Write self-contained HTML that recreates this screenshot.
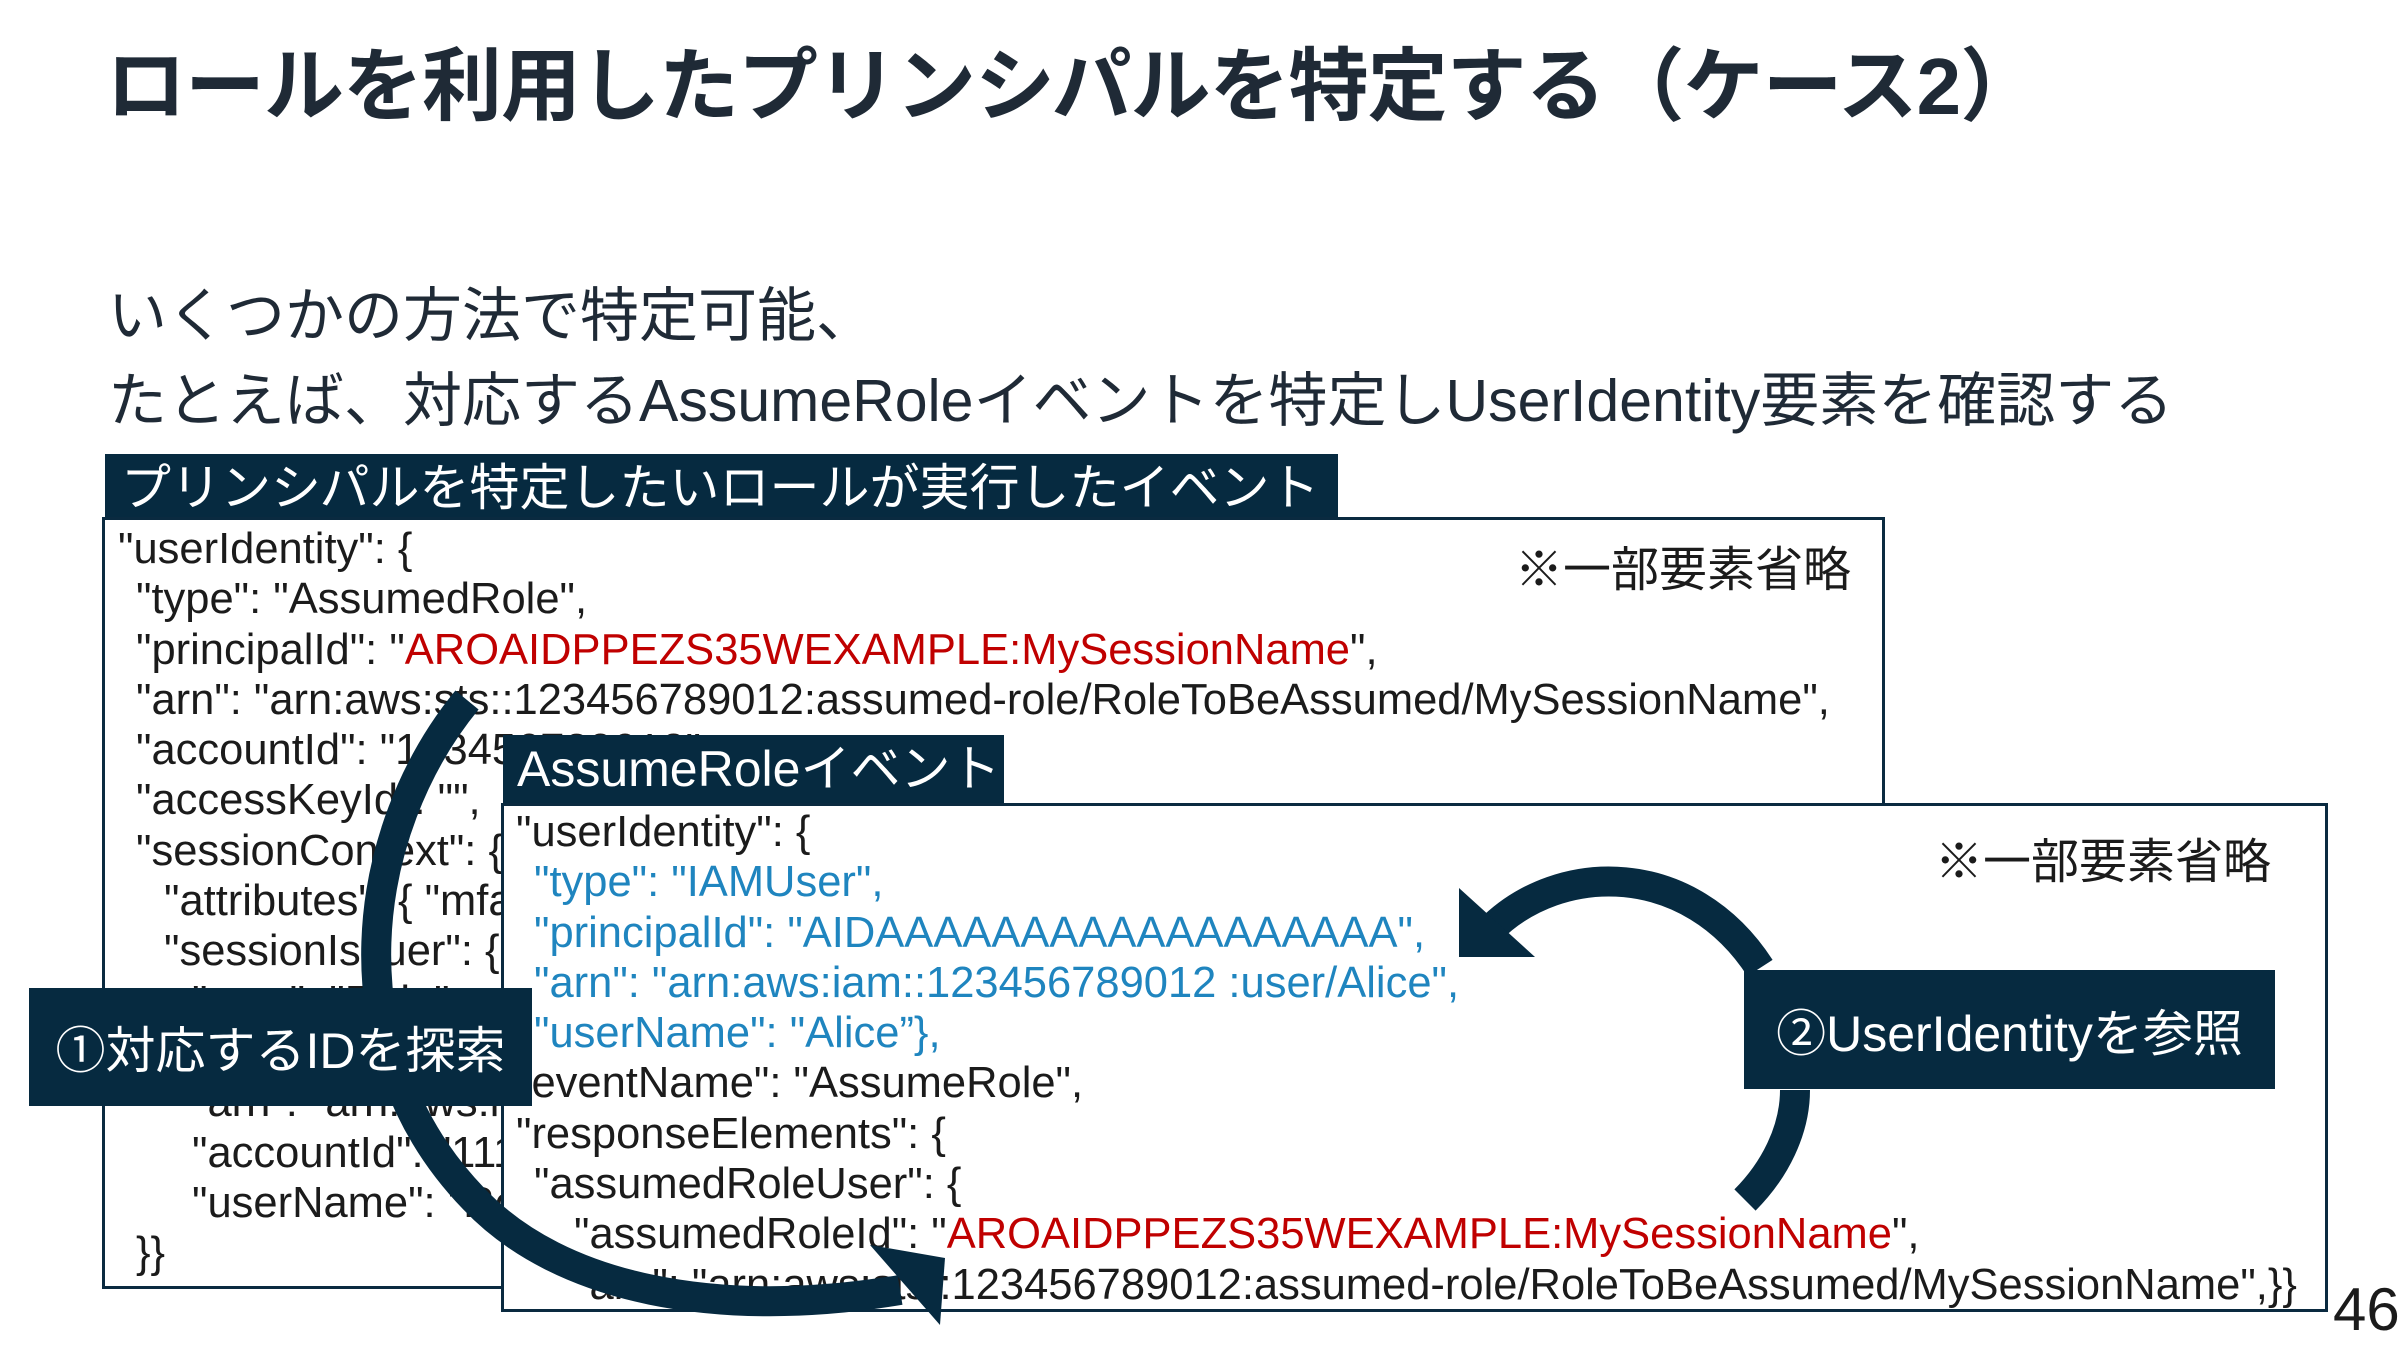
<!DOCTYPE html>
<html><head><meta charset="utf-8"><style>
*{margin:0;padding:0;box-sizing:border-box}
body{width:2400px;height:1350px;background:#fff;position:relative;overflow:hidden;font-family:"Liberation Sans","Noto Sans CJK JP",sans-serif;color:#1f2a36}
.a{position:absolute;white-space:nowrap}
.title{left:106px;top:22px;font-size:80px;font-weight:bold;color:#1f2a36;letter-spacing:-1px}
.sub{left:108px;font-size:59px;color:#1f2a36}
.box{position:absolute;background:#fff;border:3px solid #0a2a40}
.lab{position:absolute;background:#062a40;color:#fff;font-size:50px;line-height:69px;padding-left:16px;white-space:nowrap}
.code{position:absolute;font-size:43.5px;line-height:50.3px;color:#1b1b1b;white-space:nowrap}
.code div{height:50.3px}
.i1{padding-left:18px}.i2{padding-left:46px}.i3{padding-left:74px}.i4{padding-left:58px}
.r{color:#c00000}.b{color:#1f85bf}
.note{font-size:48px;color:#1b1b1b}
.call{position:absolute;background:#062a40;color:#fff;font-size:50px;display:flex;align-items:center;justify-content:center;white-space:nowrap}
</style></head><body>
<div class="a title">ロールを利用したプリンシパルを特定する（ケース2）</div>
<div class="a sub" style="top:268px">いくつかの方法で特定可能、</div>
<div class="a sub" style="top:353px">たとえば、対応するAssumeRoleイベントを特定しUserIdentity要素を確認する</div>

<div class="lab" style="left:105px;top:454px;width:1233px;height:69px">プリンシパルを特定したいロールが実行したイベント</div>
<div class="box" style="left:102px;top:517px;width:1783px;height:772px"></div>
<div class="a note" style="left:1515px;top:530px">※一部要素省略</div>
<div class="code" style="left:118px;top:524px">
<div>"userIdentity": {</div>
<div class="i1">"type": "AssumedRole",</div>
<div class="i1">"principalId": "<span class="r">AROAIDPPEZS35WEXAMPLE:MySessionName</span>",</div>
<div class="i1">"arn": "arn:aws:sts::123456789012:assumed-role/RoleToBeAssumed/MySessionName",</div>
<div class="i1">"accountId": "123456789012",</div>
<div class="i1">"accessKeyId": "",</div>
<div class="i1">"sessionContext": {</div>
<div class="i2">"attributes": { "mfaAuthenticated": "false" },</div>
<div class="i2">"sessionIssuer": {</div>
<div class="i3">"type": "Role",</div>
<div class="i3">"principalId": "AROAIDPPEZS35WEXAMPLE",</div>
<div class="i3">"arn": "arn:aws:iam::111122223333:role/RoleToBeAssumed",</div>
<div class="i3">"accountId": "111122223333",</div>
<div class="i3">"userName": "RoleToBeAssumed"</div>
<div class="i1">}}</div>
</div>

<div class="lab" style="left:503px;top:735px;width:501px;height:69px;padding-left:14px">AssumeRoleイベント</div>
<div class="box" style="left:501px;top:803px;width:1827px;height:509px"></div>
<div class="a note" style="left:1935px;top:822px">※一部要素省略</div>
<div class="code" style="left:516px;top:807px">
<div>"userIdentity": {</div>
<div class="i1 b">"type": "IAMUser",</div>
<div class="i1 b">"principalId": "AIDAAAAAAAAAAAAAAAAAA",</div>
<div class="i1 b">"arn": "arn:aws:iam::123456789012 :user/Alice",</div>
<div class="i1 b">"userName": "Alice”},</div>
<div>"eventName": "AssumeRole",</div>
<div>"responseElements": {</div>
<div class="i1">"assumedRoleUser": {</div>
<div class="i4">"assumedRoleId": "<span class="r">AROAIDPPEZS35WEXAMPLE:MySessionName</span>",</div>
<div class="i4">"arn": "arn:aws:sts::123456789012:assumed-role/RoleToBeAssumed/MySessionName",}}</div>
</div>

<svg class="a" style="left:0;top:0" width="2400" height="1350">
 <g fill="none" stroke="#062a40" stroke-width="30" stroke-linecap="butt">
  <path d="M467,700 C360,830 330,1050 474,1199 C560,1290 720,1320 900,1290"/>
  <path d="M1490,930 C1560,860 1690,860 1760,968"/>
  <path d="M1795,1090 C1795,1130 1775,1170 1745,1200"/>
 </g>
 <polygon fill="#062a40" points="870,1245 945,1258 940,1325" />
 <polygon fill="#062a40" points="1459,888 1459,957 1535,957" />
</svg>

<div class="call" style="left:29px;top:988px;width:503px;height:118px">①対応するIDを探索</div>
<div class="call" style="left:1744px;top:970px;width:531px;height:119px">②UserIdentityを参照</div>
<div class="a" style="left:2333px;top:1275px;font-size:60px;color:#1b1b1b">46</div>
</body></html>
